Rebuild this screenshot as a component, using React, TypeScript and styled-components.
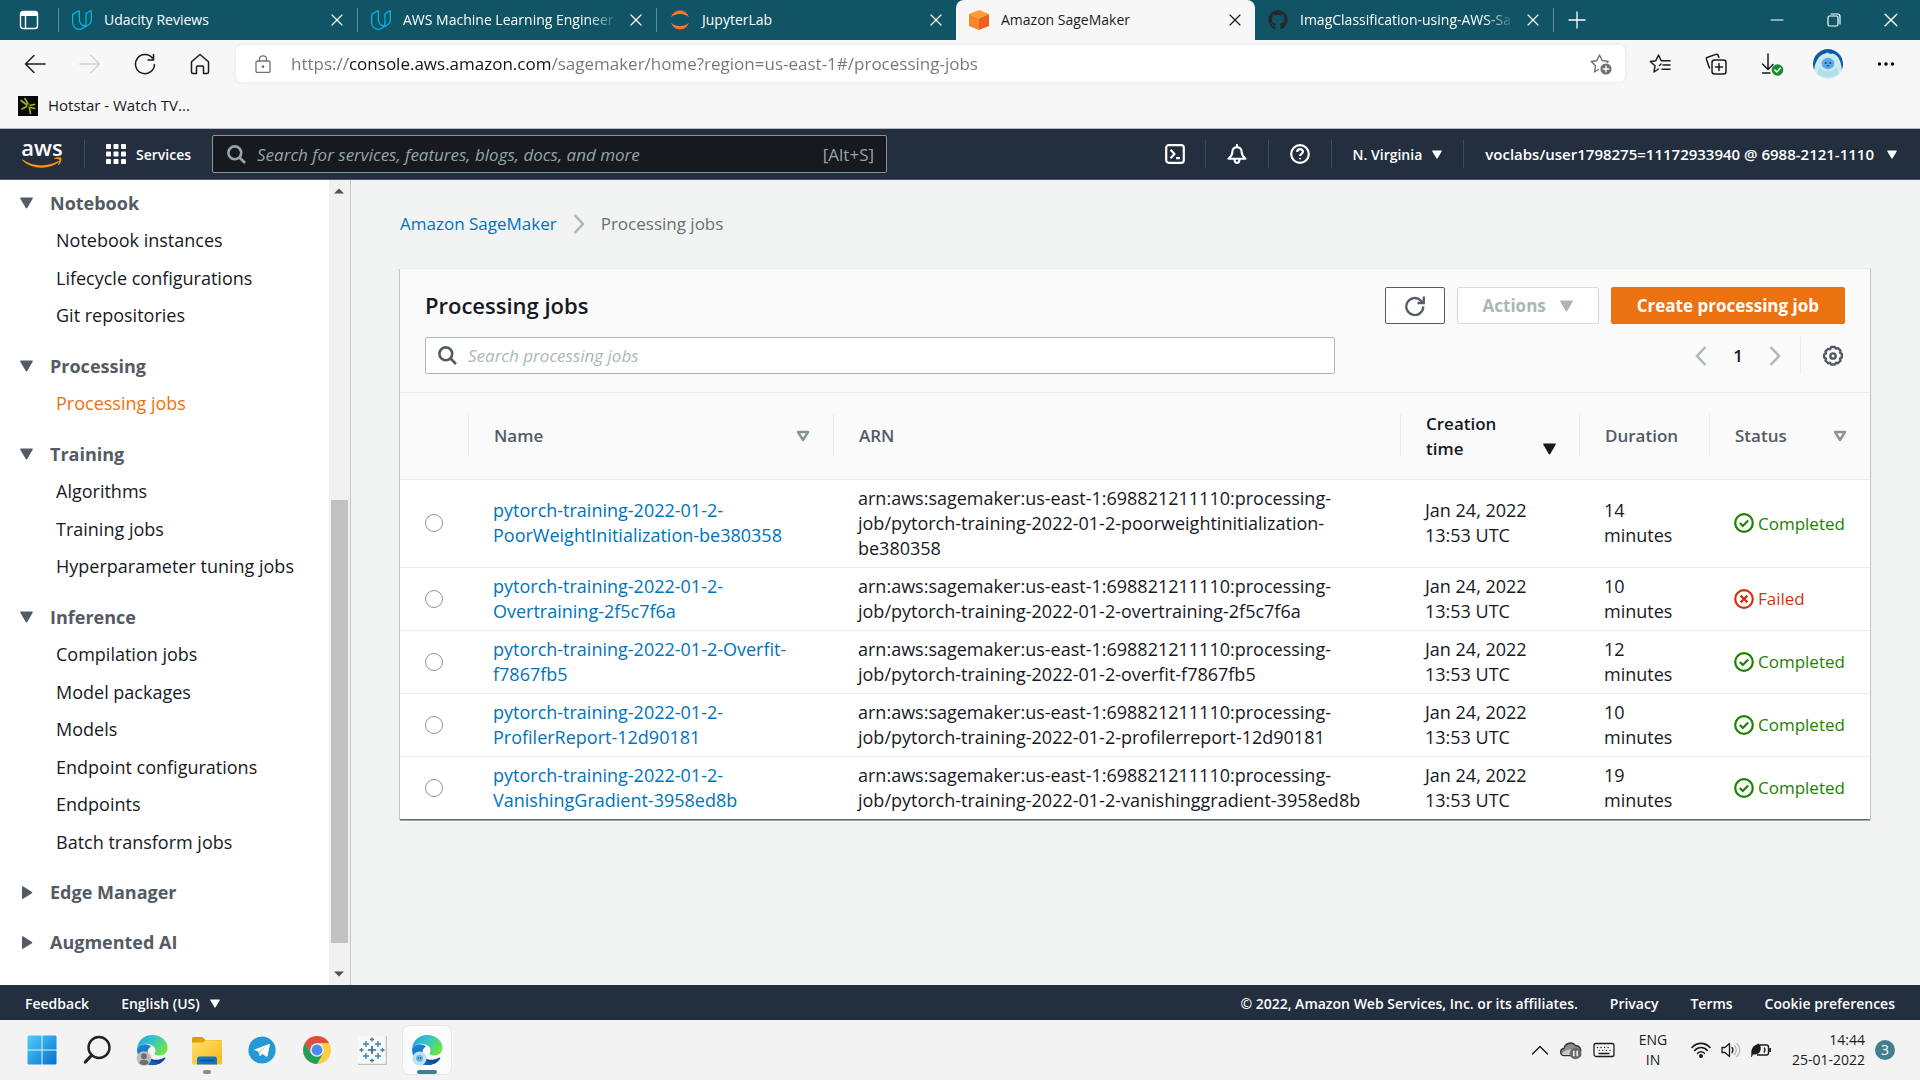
import React from "react";
import styled, { createGlobalStyle, css } from "styled-components";
import { SiUdacity } from "react-icons/si";
import { FaGithub } from "react-icons/fa";

/* ---------- theme ---------- */

const c = {
  teal: "#115465",
  chrome: "#f7f7f7",
  navy: "#232f3e",
  ink: "#16191f",
  slate: "#545b64",
  muted: "#687078",
  mist: "#aab7b8",
  line: "#eaeded",
  link: "#0073bb",
  orange: "#ec7211",
  green: "#1d8102",
  red: "#d13212",
  page: "#f2f3f3",
  taskbar: "#f3f3f3",
};

const GlobalStyle = createGlobalStyle`
  *, *::before, *::after { box-sizing: border-box; }
  body {
    margin: 0;
    font-family: "Open Sans", "Noto Sans", sans-serif;
    font-size: 18px;
    line-height: 25px;
    color: ${c.ink};
  }
  button, input { font: inherit; color: inherit; }
  button { border: 0; padding: 0; background: none; cursor: pointer; }
  a { color: inherit; text-decoration: none; }
  svg { display: block; flex: none; }
`;

const Screen = styled.div`
  display: flex;
  flex-direction: column;
  height: 100vh;
  overflow: hidden;
`;

const IconButton = styled.button<{ $w?: number; $h?: number; $color?: string }>`
  display: flex;
  flex: none;
  align-items: center;
  justify-content: center;
  width: ${(p) => p.$w ?? 20}px;
  height: ${(p) => p.$h ?? 28}px;
  color: ${(p) => p.$color ?? "inherit"};
`;

const Spacer = styled.div`
  flex: 1;
`;

/* ---------- browser tabs ---------- */

const TabStrip = styled.div`
  display: flex;
  flex: none;
  align-items: center;
  height: 40px;
  background: ${c.teal};
  color: #fff;
  font-size: 14px;
`;

const TabMenu = styled.div`
  display: flex;
  align-items: center;
  justify-content: center;
  width: 59px;
  height: 24px;
  border-right: 1px solid #5f8c98;
`;

const Tab = styled.div<{ $active?: boolean; $divider?: boolean }>`
  display: flex;
  align-items: center;
  width: 299px;
  height: 40px;
  padding: 0 14px 0 13px;
  gap: 12px;
  ${(p) =>
    p.$active &&
    css`
      background: ${c.chrome};
      color: #1b1b1b;
      border-radius: 8px 8px 0 0;
    `}
  ${(p) =>
    p.$divider &&
    css`
      height: 24px;
      border-right: 1px solid #5f8c98;
    `}
`;

const TabTitle = styled.button<{ $fade?: boolean }>`
  flex: 1;
  white-space: nowrap;
  text-align: left;
  line-height: 24px;
  ${(p) =>
    p.$fade &&
    css`
      mask-image: linear-gradient(to right, #000 86%, transparent);
    `}
`;

const WindowControls = styled.div`
  display: flex;
  padding-right: 1px;
`;

/* ---------- browser toolbar ---------- */

const Toolbar = styled.div`
  display: flex;
  flex: none;
  align-items: center;
  height: 48px;
  padding: 0 12px 1px 7px;
  background: ${c.chrome};
  color: #1b1b1b;
`;

const AddressBar = styled.label`
  display: flex;
  flex: 1;
  align-items: center;
  height: 37px;
  margin: 0 14px 0 9px;
  padding: 0 13px 0 18px;
  gap: 19px;
  border-radius: 6px;
  background: #fff;
  box-shadow: 0 0 4px rgba(0, 0, 0, 0.08);
  color: #707070;
`;

/* the host name is drawn darker than the rest of the address */
const AddressInput = styled.input`
  flex: 1;
  min-width: 0;
  height: 28px;
  padding: 0;
  border: 0;
  outline: 0;
  font-size: 17px;
  background: linear-gradient(to right, #757575 57px, #111 57px, #111 260px, #757575 260px);
  background-clip: text;
  -webkit-background-clip: text;
  color: transparent;
  caret-color: #111;
`;

const Bookmarks = styled.div`
  display: flex;
  flex: none;
  align-items: center;
  height: 41px;
  padding: 0 18px 5px;
  background: ${c.chrome};
  border-bottom: 1px solid #bcbcbc;
  font-size: 15px;
`;

const Bookmark = styled.a`
  display: flex;
  align-items: center;
  gap: 10px;
`;

/* ---------- console header ---------- */

const ConsoleHeader = styled.header`
  display: flex;
  flex: none;
  align-items: center;
  height: 51px;
  padding-right: 2px;
  background: ${c.navy};
  border-bottom: 1px solid #545b64;
  color: #fff;
  font-weight: 600;
`;

const AwsLogo = styled.a`
  display: flex;
  flex-direction: column;
  align-items: center;
  width: 84px;
  height: 34px;
  font-size: 22px;
  line-height: 20px;
`;

const HeaderCell = styled.div`
  display: flex;
  align-items: center;
  height: 28px;
  padding: 0 21px;
  border-left: 1px solid #414b58;
`;

const HeaderButton = styled.button<{ $large?: boolean }>`
  display: flex;
  align-items: center;
  gap: ${(p) => (p.$large ? 13 : 10)}px;
  font-size: ${(p) => (p.$large ? 15 : 14)}px;
  white-space: nowrap;
`;

const ConsoleSearch = styled.label`
  display: flex;
  flex: none;
  align-items: center;
  width: 675px;
  height: 38px;
  padding: 0 12px 0 14px;
  gap: 11px;
  border: 1px solid #879596;
  border-radius: 2px;
  background: ${c.ink};
  color: #95a5a6;
  font-size: 17px;
  font-weight: 400;
`;

const PlainInput = styled.input<{ $tone: string }>`
  flex: 1;
  min-width: 0;
  height: 28px;
  padding: 0;
  border: 0;
  outline: 0;
  background: none;
  &::placeholder {
    color: ${(p) => p.$tone};
    font-style: italic;
    opacity: 1;
  }
`;

/* ---------- console body ---------- */

const ConsoleBody = styled.div`
  display: flex;
  flex: 1;
  min-height: 0;
  background: ${c.page};
`;

const SideNav = styled.nav`
  width: 329px;
  padding-top: 10px;
  overflow: hidden;
  background: #fff;
`;

const NavGroup = styled.section`
  padding-bottom: 12px;
`;

const NavHeading = styled.button`
  display: flex;
  align-items: center;
  height: 26px;
  padding-left: 20px;
  gap: 17px;
  color: ${c.slate};
  font-weight: 700;
`;

const NavList = styled.ul`
  margin: 0;
  padding: 12px 0 0 56px;
  list-style: none;
`;

const NavItem = styled.li`
  height: 38px;
  &:nth-child(even) {
    height: 37px;
  }
`;

const NavLink = styled.a<{ $current?: boolean }>`
  color: ${(p) => (p.$current ? c.orange : c.ink)};
`;

const Scrollbar = styled.div`
  display: flex;
  flex-direction: column;
  flex: none;
  width: 22px;
  padding-right: 1px;
  border-right: 1px solid #c0c5c7;
  background: #f1f1f1;
  color: #505050;
`;

const ScrollArrow = styled.div`
  display: flex;
  align-items: center;
  justify-content: center;
  height: 22px;
`;

const ScrollTrack = styled.div`
  display: grid;
  flex: 1;
  grid-template-rows: 298fr 443fr 20fr;
`;

const ScrollThumb = styled.div`
  grid-row: 2;
  margin: 0 1px 0 2px;
  background: #c1c1c1;
`;

const Main = styled.main`
  flex: 1;
  min-width: 0;
  padding: 31px 50px 0 49px;
`;

const Breadcrumb = styled.nav`
  display: flex;
  align-items: center;
  gap: 16px;
  margin-bottom: 32px;
  color: ${c.muted};
  font-size: 17px;
`;

const Separator = styled.span`
  color: ${c.mist};
`;

const BlueLink = styled.a`
  color: ${c.link};
`;

const Card = styled.section`
  background: #fff;
  border-top: 1px solid ${c.line};
  box-shadow: 0 1px 1px 0 rgba(0, 28, 36, 0.3), 1px 1px 1px 0 rgba(0, 28, 36, 0.15),
    -1px 1px 1px 0 rgba(0, 28, 36, 0.15), 0 2px 0 0 rgba(0, 28, 36, 0.25);
`;

const CardHead = styled.div`
  display: flex;
  flex-direction: column;
  gap: 13px;
  padding: 18px 25px;
  background: #fafafa;
  border-bottom: 1px solid ${c.line};
`;

const CardRow = styled.div`
  display: flex;
  align-items: center;
  height: 37px;
`;

const CardTitle = styled.h2`
  flex: 1;
  margin: 0;
  font-size: 22px;
  font-weight: 600;
`;

const Actions = styled.div`
  display: flex;
  gap: 12px;
`;

const Button = styled.button<{ $kind: "normal" | "disabled" | "primary" }>`
  display: flex;
  align-items: center;
  justify-content: center;
  gap: 14px;
  height: 37px;
  padding: 0 ${(p) => (p.$kind === "normal" ? 19 : 25)}px;
  border: 1px solid;
  border-radius: 2px;
  font-weight: 700;
  font-size: 17px;
  white-space: nowrap;
  ${(p) =>
    p.$kind === "primary"
      ? css`
          background: ${c.orange};
          border-color: ${c.orange};
          color: #fff;
        `
      : p.$kind === "disabled"
      ? css`
          background: #fff;
          border-color: #d5dbdb;
          color: ${c.mist};
        `
      : css`
          background: #fff;
          border-color: ${c.slate};
          color: ${c.slate};
        `}
`;

const FilterBox = styled.label`
  display: flex;
  flex: 0 1 910px;
  align-items: center;
  height: 37px;
  padding: 0 12px;
  gap: 11px;
  border: 1px solid ${c.mist};
  border-radius: 2px;
  background: #fff;
  color: ${c.slate};
  font-size: 17px;
`;

const Pager = styled.div`
  display: flex;
  align-items: center;
  height: 37px;
  gap: 19px;
  padding-right: 15px;
  border-right: 1px solid ${c.line};
  margin-right: 20px;
  color: ${c.mist};
`;

const PageNumber = styled.button`
  width: 16px;
  color: ${c.ink};
  font-weight: 600;
  font-size: 17px;
`;

/* ---------- table ---------- */

const Table = styled.table`
  width: 100%;
  table-layout: fixed;
  border-collapse: collapse;
`;

const Col = styled.col<{ $w?: number }>`
  width: ${(p) => (p.$w ? `${p.$w}px` : "auto")};
`;

const Th = styled.th`
  height: 86px;
  padding: 0;
  background: #fafafa;
  border-bottom: 1px solid ${c.line};
  text-align: left;
`;

const ThInner = styled.div<{ $sorted?: boolean; $last?: boolean }>`
  display: flex;
  align-items: center;
  justify-content: space-between;
  height: 43px;
  padding: 0 23px 0 25px;
  border-right: ${(p) => (p.$last ? 0 : 1)}px solid ${c.line};
  color: ${(p) => (p.$sorted ? c.ink : c.slate)};
  font-size: 17px;
  font-weight: 600;
`;

const SortButton = styled.button<{ $sorted?: boolean }>`
  align-self: ${(p) => (p.$sorted ? "flex-end" : "center")};
  padding: 2px 0;
  color: ${(p) => (p.$sorted ? c.ink : "#879596")};
`;

const Td = styled.td`
  padding: 6px 0 6px 24px;
  border-bottom: 1px solid ${c.line};
  white-space: pre-line;
  tr:last-child > & {
    border-bottom: 0;
  }
`;

const Radio = styled.input`
  display: block;
  appearance: none;
  width: 18px;
  height: 18px;
  margin: 0 0 0 1px;
  border: 1px solid #879596;
  border-radius: 50%;
  background: #fff;
`;

const Status = styled.span<{ $ok: boolean }>`
  display: flex;
  align-items: center;
  gap: 4px;
  color: ${(p) => (p.$ok ? c.green : c.red)};
  font-size: 17px;
`;

/* ---------- footer ---------- */

const Footer = styled.footer`
  display: flex;
  flex: none;
  align-items: center;
  height: 35px;
  padding: 1px 25px 0;
  gap: 32px;
  background: ${c.navy};
  color: #fff;
  font-size: 14px;
  font-weight: 600;
  white-space: nowrap;
`;

/* ---------- taskbar ---------- */

const Taskbar = styled.div`
  display: flex;
  flex: none;
  align-items: center;
  height: 60px;
  padding: 0 25px 0 18px;
  background: ${c.taskbar};
  color: #1b1b1b;
`;

const Apps = styled.div`
  display: flex;
  flex: 1;
  gap: 7px;
`;

const AppButton = styled.button<{ $active?: boolean; $running?: boolean }>`
  display: grid;
  grid-template-rows: 36px 4px;
  row-gap: 2px;
  justify-items: center;
  align-items: center;
  width: 48px;
  height: 48px;
  padding-top: 6px;
  border-radius: 6px;
  ${(p) =>
    p.$active &&
    css`
      background: #fbfbfb;
      box-shadow: 0 0 0 1px #e8e8e8;
    `}
  &::after {
    content: "";
    width: ${(p) => (p.$active ? 20 : p.$running ? 8 : 0)}px;
    height: 4px;
    border-radius: 2px;
    background: ${(p) => (p.$active ? "#417f8e" : "#8a8a8a")};
  }
`;

const Tray = styled.div`
  display: flex;
  align-items: center;
  gap: 10px;
  font-size: 14px;
  line-height: 20px;
`;

const Stack = styled.div<{ $align: "center" | "right"; $w: number }>`
  width: ${(p) => p.$w}px;
  text-align: ${(p) => p.$align};
  white-space: pre-line;
`;

const Badge = styled.span`
  display: flex;
  align-items: center;
  justify-content: center;
  width: 20px;
  height: 20px;
  border-radius: 50%;
  background: #417f8e;
  color: #fff;
  font-size: 14px;
`;

/* ---------- icons ---------- */

type IconProps = { size?: number };

const Line: React.FC<{ size?: number; box?: number; w?: number; children: React.ReactNode }> = ({
  size = 20,
  box = 20,
  w = 1.3,
  children,
}) => (
  <svg
    width={size}
    height={size}
    viewBox={`0 0 ${box} ${box}`}
    fill="none"
    stroke="currentColor"
    strokeWidth={w}
    strokeLinecap="round"
    strokeLinejoin="round"
    aria-hidden
  >
    {children}
  </svg>
);

const Close = ({ size = 12 }: IconProps) => (
  <Line size={size} box={12} w={1.2}>
    <path d="M1 1l10 10M11 1L1 11" />
  </Line>
);

const Caret = ({ w = 10 }: { w?: number }) => (
  <svg width={w} height={w - 1} viewBox="0 0 12 11" fill="currentColor" aria-hidden>
    <path d="M.8.5h10.4c.6 0 .9.5.6.9L6.7 10.1c-.3.6-1.1.6-1.4 0L.2 1.4C-.1 1 .2.5.8.5z" />
  </svg>
);

const CaretRight = () => (
  <svg width={13} height={13} viewBox="0 0 13 13" fill="currentColor" aria-hidden>
    <path d="M2 .8v11.4c0 .6.6.9 1 .6l9-5.600c.5-.3.5-1 0-1.300L3 .2C2.600 0 2 .2 2 .8z" />
  </svg>
);

const SmallArrow = ({ up = false }: { up?: boolean }) => (
  <svg width={10} height={6} viewBox="0 0 10 6" fill="currentColor" aria-hidden>
    <path d={up ? "M0 5.5L5 .5l5 5z" : "M0 .5l5 5 5-5z"} />
  </svg>
);

const SortOutline = () => (
  <svg width={14} height={12} viewBox="0 0 14 12" fill="none" stroke="currentColor" strokeWidth={2.4} strokeLinejoin="round" aria-hidden>
    <path d="M2 2h10l-5 8z" />
  </svg>
);

const Magnifier = ({ size = 19 }: IconProps) => (
  <svg width={size} height={size} viewBox="0 0 19 19" fill="none" stroke="currentColor" strokeWidth={2.6} aria-hidden>
    <circle cx="7.8" cy="7.8" r="6.4" />
    <path d="M12.500 12.500l5.500 5.500" />
  </svg>
);

const Chevron = ({ left = false }: { left?: boolean }) => (
  <svg width={12} height={20} viewBox="0 0 12 20" fill="none" stroke="currentColor" strokeWidth={2.4} aria-hidden>
    <path d={left ? "M10.5 1L2 10l8.5 9" : "M1.5 1L10 10l-8.5 9"} />
  </svg>
);

const Refresh = () => (
  <svg width={20} height={20} viewBox="0 0 20 20" fill="none" stroke="currentColor" strokeWidth={2.3} aria-hidden>
    <path d="M18.300 10.500A8.500 8.500 0 1 1 15.800 4.500L18.200 6.600" />
    <path d="M18.800.5v6.500h-6.300" />
  </svg>
);

const Gear = () => (
  <svg width={22} height={22} viewBox="0.900 0.600 18.200 18.200" fill="none" stroke="currentColor" strokeWidth={2} strokeLinejoin="round" aria-hidden>
    <path d="M8.500 2.200h3l.9 1.400 1.700-.4 2.100 2.100-.4 1.700 1.500.9v3.100l-1.500.9.400 1.700-2.100 2.100-1.700-.4-.9 1.500h-3l-.9-1.500-1.700.4-2.100-2.100.4-1.700-1.500-.9V8.500l1.500-.9-.4-1.700 2.100-2.100 1.700.4z" />
    <circle cx="10" cy="9.700" r="2.200" />
  </svg>
);

const StatusIcon = ({ ok }: { ok: boolean }) => (
  <svg width={20} height={20} viewBox="0 0 20 20" fill="none" stroke="currentColor" strokeWidth={2.2} aria-hidden>
    <circle cx="10" cy="10" r="8.800" />
    <path d={ok ? "M5.8 10l3 3 5.4-5.6" : "M6.6 6.6l6.8 6.8M13.4 6.6l-6.8 6.8"} />
  </svg>
);

const AppGrid = () => (
  <svg width={20} height={20} viewBox="0 0 20 20" fill="currentColor" aria-hidden>
    {[0, 7.5, 15].map((y) => [0, 7.5, 15].map((x) => <rect key={`${x}-${y}`} x={x} y={y} width={5} height={5} rx={0.8} />))}
  </svg>
);

const Swoosh = () => (
  <svg width={40} height={12} viewBox="0 0 40 12" aria-hidden>
    <path d="M.6 2.500C10 9.500 25 10.500 36 4.300c.8-.4 1.400.4.700 1C27 13 9 12.500.3 3.300c-.5-.5-.1-1.100.3-.8z" fill="#ff9900" />
    <path d="M32 1.400c2-1.300 6.300-1.500 7.200-.5.800 1.100-.3 5.300-2.500 7.200-.4.300-.8.100-.6-.3.900-2.100 1.500-4.500 1.100-5.100-.500-.6-3-.7-4.900-.6-.5 0-.6-.4-.3-.7z" fill="#ff9900" />
  </svg>
);

const Shell = () => (
  <Line w={2.2}>
    <rect x="1.200" y="1.200" width="17.600" height="17.600" rx="2.500" />
    <path d="M5.500 5.800l4 4.200-4 4.200M11 14.200h4" strokeLinecap="butt" />
  </Line>
);

const Bell = () => (
  <Line w={2.1}>
    <path d="M10 1v2M10 3.200c-3 0-4.600 2-4.600 4.600 0 3.200-1.200 4.700-3.900 6.900h17c-2.700-2.200-3.900-3.700-3.900-6.900C14.600 5.200 13 3.200 10 3.200zM7.500 15c0 5.300 5 5.300 5 0" />
  </Line>
);

const Help = () => (
  <Line w={2.2}>
    <circle cx="10" cy="10" r="8.800" />
    <path d="M7.200 8c0-3.900 5.800-3.700 5.700-.2 0 2-2.800 2-2.800 4.200M10 14v1.300" strokeLinecap="butt" />
  </Line>
);

const JupyterIcon = () => (
  <svg width={20} height={20} viewBox="0 0 20 20" fill="#f37726" aria-hidden>
    <path d="M1 7.300C2.500 3 6 .6 10 .6S17.500 3 19 7.300C17 5.300 13.800 4 10 4S3 5.300 1 7.300z" />
    <path d="M1 12.700C2.500 17 6 19.400 10 19.400s7.500-2.400 9-6.700c-2 2-5.200 3.300-9 3.300s-7-1.300-9-3.300z" />
  </svg>
);

const CubeIcon = () => (
  <svg width={20} height={20} viewBox="0 0 20 20" aria-hidden>
    <path d="M10 0l10 4-10 4.500L0 4z" fill="#ff9d2e" />
    <path d="M0 4l10 4.500V20L0 16z" fill="#f8852a" />
    <path d="M20 4L10 8.500V20l10-4z" fill="#ec5f20" />
  </svg>
);

const HotstarIcon = () => (
  <svg width={20} height={20} viewBox="0 0 20 20" aria-hidden>
    <rect width="20" height="20" fill="#050a08" />
    <path
      d="M3 4.500l6 4.500M7 2.500l3 5.500M16.500 8.500l-5.500 1M16.500 12.500l-5.500-1.500M12.500 17.500l-1-5.500M4 13l5.500-3"
      stroke="#a3ae1a"
      strokeWidth="1.600"
      strokeLinecap="round"
    />
    <circle cx="10.500" cy="10" r="1.400" fill="#16351a" />
  </svg>
);

const Avatar = ({ size = 30 }: IconProps) => (
  <svg width={size} height={size} viewBox="0 0 30 30" aria-hidden>
    <circle cx="15" cy="15" r="15" fill="#cdeaf0" />
    <path d="M1.200 21A15 15 0 1 1 28.800 21C28.500 14 26 6 19.500 4.500L17 5.500 15 3.500 13 4.500C6 5 2 13 1.200 21z" fill="#0a5ca8" />
    <path d="M3.500 24C2.500 14 6.500 5.500 12 5l2-1.500L15.500 5 17 4.500c6 1.500 10 9.500 9.500 19.500-6 7-17 7-23 0z" fill="#cbeaf0" />
    <path d="M6 17c2 7 16 7 18 0l1.500 7.500c-5 5-16 5-21 0z" fill="#b2dfe6" />
    <ellipse cx="15" cy="14.500" rx="6.300" ry="5.800" fill="#5ba9e8" />
    <circle cx="12.800" cy="14" r="1" fill="#16406e" />
    <circle cx="17.200" cy="14" r="1" fill="#16406e" />
    <path d="M13.500 17q1.500-1 3 0" stroke="#16406e" fill="none" />
  </svg>
);

const EdgeIcon = ({ user = false }: { user?: boolean }) => (
  <svg width={32} height={32} viewBox="0 0 32 32" aria-hidden>
    <defs>
      <linearGradient id="edgeTop" x1="0" y1="0" x2="1" y2="0.500">
        <stop offset="0" stopColor="#1fa4e4" />
        <stop offset=".5" stopColor="#33c5c8" />
        <stop offset="1" stopColor="#6be34a" />
      </linearGradient>
      <linearGradient id="edgeSide" x1="0" y1="0" x2="0.400" y2="1">
        <stop offset="0" stopColor="#1a8ad8" />
        <stop offset="1" stopColor="#0f5fb4" />
      </linearGradient>
    </defs>
    <path d="M11.500 17C11 25 19 28.500 28.500 23.500c.8-.3 1.200.3.700 1C25.500 31 17 32.500 11 29.500z" fill="#0c4a93" />
    <path d="M1 15C1 24 7 31 16 31c3 0 6-1 8-2-7 .5-13-5-12.500-11 .2-2.500 1.500-4.200 3.500-5.500C10 8.500 3 10 1 15z" fill="url(#edgeSide)" />
    <path d="M1 14.500C2 6.500 8 1 16 1c9 0 15.500 6 15.500 12.500 0 5-3.500 8-8 8-4 0-5.500-1.300-4.700-2.700 1.200-1.800 1-4.300-.8-6C13.500 8.500 4.500 8.500 1 14.500z" fill="url(#edgeTop)" />
    {user ? (
      <>
        <circle cx="8" cy="24.500" r="7.300" fill="#bdbdbd" />
        <circle cx="8" cy="22.200" r="2.900" fill="#6e6e6e" />
        <path d="M3.300 29c.3-4.500 9.100-4.500 9.400 0-2.500 2.800-6.900 2.800-9.400 0z" fill="#6e6e6e" />
      </>
    ) : (
      <>
        <circle cx="8.500" cy="24.500" r="7" fill="#bfe3ee" />
        <circle cx="8.500" cy="24.300" r="3.400" fill="#6bb2e6" />
        <circle cx="7.300" cy="24" r=".8" fill="#1d5d96" />
        <circle cx="9.700" cy="24" r=".8" fill="#1d5d96" />
      </>
    )}
  </svg>
);

const WindowsIcon = () => (
  <svg width={30} height={30} viewBox="0 0 30 30" aria-hidden>
    <defs>
      <linearGradient id="win" x1="0" y1="0" x2="1" y2="1">
        <stop offset="0" stopColor="#50d0fb" />
        <stop offset="1" stopColor="#0270d0" />
      </linearGradient>
    </defs>
    <path d="M1.500.5h13v14h-14v-13zM15.500.5h13l1 1v13h-14zM.5 15.500h14v14h-13l-1-1zM15.500 15.500h14v13l-1 1h-13z" fill="url(#win)" />
  </svg>
);

const TaskSearchIcon = () => (
  <svg width={30} height={30} viewBox="0 0 30 30" fill="none" stroke="#222" strokeLinecap="round" aria-hidden>
    <circle cx="17" cy="12.500" r="10.500" strokeWidth="2.400" />
    <path d="M9.500 20.500L3.300 27" strokeWidth="3.200" />
  </svg>
);

const FolderIcon = () => (
  <svg width={32} height={32} viewBox="0 0 32 32" aria-hidden>
    <defs>
      <linearGradient id="fold" x1="0" y1="0" x2="1" y2="1">
        <stop offset="0" stopColor="#ffdf70" />
        <stop offset="1" stopColor="#fbb915" />
      </linearGradient>
    </defs>
    <path d="M1 4.500C1 3.600 1.600 3 2.500 3h9l3 3H29.500c.8 0 1.500.7 1.500 1.500V12H1z" fill="#e0a100" />
    <path d="M1 8.500h11l2.500-2.300H31V29c0 .8-.6 1.500-1.500 1.500h-27C1.600 30.500 1 29.800 1 29z" fill="url(#fold)" />
    <path d="M6 30.500V25C6 23.600 6.900 22.500 8.500 22.500h15c1.600 0 2.500 1.100 2.500 2.500v5.500z" fill="#1574c4" />
    <path d="M10 26.500h12" stroke="#0a4d92" strokeWidth="1.500" strokeLinecap="round" />
  </svg>
);

const TelegramIcon = () => (
  <svg width={28} height={28} viewBox="0 0 28 28" aria-hidden>
    <circle cx="14" cy="14" r="13.600" fill="#2399d6" />
    <path d="M6 13.700l14.800-5.800c.8-.3 1.300.2 1.100 1.100L19.500 20c-.2.8-.7 1-1.400.6l-3.700-2.700-1.900 1.800c-.4.400-.9.300-1-.3l-1.200-4-4.200-1.300c-.7-.2-.7-.1-.1-.4z" fill="#fff" />
    <path d="M10.600 15.300l7.900-5-6.300 6-.6 3.300z" fill="#b9dcef" />
  </svg>
);

const ChromeIcon = () => (
  <svg width={32} height={32} viewBox="0 0 32 32" aria-hidden>
    <circle cx="16" cy="16" r="14" fill="#fbcf45" />
    <path d="M3.900 9A14 14 0 0 0 16 30L22.100 19.500H9.900z" fill="#1fa15d" />
    <path d="M16 2A14 14 0 0 1 28.100 9H16L9.900 19.500 3.900 9A14 14 0 0 1 16 2z" fill="#dd4f43" />
    <circle cx="16" cy="16" r="6.800" fill="#f3f3f3" />
    <circle cx="16" cy="16" r="5.400" fill="#4a8af4" />
  </svg>
);

const TableauIcon = () => {
  const plus = (x: number, y: number, r: number) => `M${x - r} ${y}h${2 * r}M${x} ${y - r}v${2 * r}`;
  return (
    <svg width={30} height={30} viewBox="0 0 30 30" fill="none" aria-hidden>
      <rect x="1" y="1" width="28" height="28" fill="#f8f8f8" />
      <path d="M1 29.300h28.300V1" stroke="#bdbdbd" strokeWidth="1.200" />
      <path d={plus(15, 15, 4)} stroke="#2f6f9b" strokeWidth="1.700" />
      <path d={[plus(9, 9, 3), plus(21, 9, 3), plus(9, 21, 3), plus(21, 21, 3)].join("")} stroke="#3f7fa8" strokeWidth="1.400" />
      <path d={[plus(15, 4.5, 2), plus(15, 25.5, 2), plus(4.5, 15, 2), plus(25.5, 15, 2)].join("")} stroke="#3f7fa8" strokeWidth="1.300" />
    </svg>
  );
};

/* ---------- data ---------- */

const tabs = [
  { title: "Udacity Reviews", icon: <SiUdacity size={20} color="#02b3e4" />, divider: true },
  { title: "AWS Machine Learning Engineer", icon: <SiUdacity size={20} color="#02b3e4" />, divider: true, fade: true },
  { title: "JupyterLab", icon: <JupyterIcon /> },
  { title: "Amazon SageMaker", icon: <CubeIcon />, active: true },
  { title: "ImagClassification-using-AWS-Sa", icon: <FaGithub size={20} color="#24292e" />, divider: true, fade: true },
];

const nav = [
  { title: "Notebook", items: ["Notebook instances", "Lifecycle configurations", "Git repositories"] },
  { title: "Processing", items: ["Processing jobs"] },
  { title: "Training", items: ["Algorithms", "Training jobs", "Hyperparameter tuning jobs"] },
  {
    title: "Inference",
    items: ["Compilation jobs", "Model packages", "Models", "Endpoint configurations", "Endpoints", "Batch transform jobs"],
  },
  { title: "Edge Manager", items: [] },
  { title: "Augmented AI", items: [] },
  { title: "AWS Marketplace", items: [] },
];

const arn = "arn:aws:sagemaker:us-east-1:698821211110:processing-\njob/pytorch-training-2022-01-2-";

const jobs = [
  { name: "\nPoorWeightInitialization-be380358", arn: "poorweightinitialization-\nbe380358", mins: 14, ok: true },
  { name: "\nOvertraining-2f5c7f6a", arn: "overtraining-2f5c7f6a", mins: 10, ok: false },
  { name: "Overfit-\nf7867fb5", arn: "overfit-f7867fb5", mins: 12, ok: true },
  { name: "\nProfilerReport-12d90181", arn: "profilerreport-12d90181", mins: 10, ok: true },
  { name: "\nVanishingGradient-3958ed8b", arn: "vanishinggradient-3958ed8b", mins: 19, ok: true },
];

/* ---------- sections ---------- */

const BrowserChrome = () => (
  <>
    <TabStrip>
      <TabMenu>
        <IconButton aria-label="Tab actions">
          <svg width={20} height={20} viewBox="0 0 20 20" fill="none" stroke="#fff" strokeWidth={1.4} aria-hidden>
            <rect x="1.500" y="1.500" width="17" height="17" rx="2.500" />
            <path d="M2 4h16" strokeWidth="4" />
            <path d="M6.500 5v13" />
          </svg>
        </IconButton>
      </TabMenu>
      {tabs.map((t) => (
        <Tab key={t.title} $active={t.active} $divider={t.divider}>
          {t.icon}
          <TabTitle $fade={t.fade}>{t.title}</TabTitle>
          <IconButton $w={12} aria-label={`Close ${t.title}`}>
            <Close />
          </IconButton>
        </Tab>
      ))}
      <IconButton $w={45} aria-label="New tab">
        <Line size={18} box={18}>
          <path d="M9 1v16M1 9h16" />
        </Line>
      </IconButton>
      <Spacer />
      <WindowControls>
        <IconButton $w={57} aria-label="Minimize">
          <Line size={14} box={14} w={1.2}>
            <path d="M1 7h12" />
          </Line>
        </IconButton>
        <IconButton $w={57} aria-label="Restore">
          <Line size={14} box={14} w={1.2}>
            <rect x="1" y="3" width="10" height="10" rx="1.500" />
            <path d="M4 1h6.500Q13 1 13 3.500V11" />
          </Line>
        </IconButton>
        <IconButton $w={57} aria-label="Close window">
          <Close size={14} />
        </IconButton>
      </WindowControls>
    </TabStrip>
    <Toolbar>
      <IconButton $w={55} aria-label="Back">
        <Line size={22} box={22} w={1.5}>
          <path d="M21 11H1.500M10 2.500L1.500 11l8.500 8.500" />
        </Line>
      </IconButton>
      <IconButton $w={55} $color="#d0d0d0" aria-label="Forward">
        <Line size={22} box={22} w={1.5}>
          <path d="M1 11h19.500M12 2.500l8.500 8.500-8.500 8.500" />
        </Line>
      </IconButton>
      <IconButton $w={55} aria-label="Refresh page">
        <Line size={22} box={22} w={1.5}>
          <path d="M20.500 11.500A9.500 9.500 0 1 1 18.300 5M19.500 1.500V7H14" />
        </Line>
      </IconButton>
      <IconButton $w={55} aria-label="Home">
        <Line size={22} box={22} w={1.5}>
          <path d="M2.500 8.700L11 1.500l8.500 7.200V19q0 1.500-1.500 1.500h-3.500V14q0-1-1-1h-5q-1 0-1 1v6.500H4Q2.500 20.500 2.500 19z" />
        </Line>
      </IconButton>
      <AddressBar>
        <Line size={18} box={18} w={1.3}>
          <rect x="2" y="6" width="14" height="11.500" rx="1.500" />
          <path d="M5.500 6V4C5.500-.3 12.500-.3 12.500 4v2" />
          <circle cx="9" cy="11.700" r=".7" fill="currentColor" />
        </Line>
        <AddressInput
          aria-label="Address"
          defaultValue="https://console.aws.amazon.com/sagemaker/home?region=us-east-1#/processing-jobs"
        />
        <IconButton $w={22} aria-label="Add to favorites">
          <Line size={22} box={22} w={1.4}>
            <path d="M8.500 16.500L4.500 19l1-6.200-4.300-4.300 5.600-.8L9.500 2l2.700 5.500 6 1-1 1" />
            <circle cx="16" cy="16" r="5.600" fill="currentColor" stroke="none" />
            <path d="M16 13.200v5.600M13.200 16h5.600" stroke="#fff" />
          </Line>
        </IconButton>
      </AddressBar>
      <IconButton $w={42} aria-label="Favorites">
        <Line size={22} box={22} w={1.5}>
          <path d="M9.500 16L5 19l1-6.200L1.300 8.500l5.500-.8L9.500 2l2.700 5.700M14 7.700h7M14 12h7M13 16.300h8M12.200 7.700l1.800 0M12 11l-1.500 1.500" />
        </Line>
      </IconButton>
      <IconButton $w={70} aria-label="Collections">
        <Line size={22} box={22} w={1.5}>
          <rect x="7" y="7" width="14" height="14" rx="2.500" />
          <path d="M14 10.500v7M10.500 14h7M4.500 15L1.500 6.500Q1 4.800 2.600 4.200L11 1.400q1.600-.5 2.200 1l.6 1.800" />
        </Line>
      </IconButton>
      <IconButton $w={42} aria-label="Downloads">
        <Line size={24} box={24} w={1.5}>
          <path d="M8 2v15M2.500 12L8 17.500 13 12.500M2.500 21H10" />
          <circle cx="17.500" cy="18" r="5.800" fill="#1a8a36" stroke="none" />
          <path d="M14.800 18l2 2 3.500-3.700" stroke="#fff" />
        </Line>
      </IconButton>
      <IconButton $w={70} $h={32} aria-label="Profile">
        <Avatar />
      </IconButton>
      <IconButton $w={45} aria-label="Settings and more">
        <svg width={18} height={4} viewBox="0 0 18 4" aria-hidden>
          <circle cx="2.500" cy="2" r="1.700" />
          <circle cx="9" cy="2" r="1.700" />
          <circle cx="15.500" cy="2" r="1.700" />
        </svg>
      </IconButton>
    </Toolbar>
    <Bookmarks>
      <Bookmark href="#hotstar">
        <HotstarIcon />
        Hotstar - Watch TV...
      </Bookmark>
    </Bookmarks>
  </>
);

const AwsHeader = () => (
  <ConsoleHeader>
    <AwsLogo href="#aws">
      aws
      <Swoosh />
    </AwsLogo>
    <HeaderCell>
      <HeaderButton>
        <AppGrid />
        Services
      </HeaderButton>
    </HeaderCell>
    <ConsoleSearch>
      <Magnifier />
      <PlainInput $tone="#95a5a6" aria-label="Search the console" placeholder="Search for services, features, blogs, docs, and more" />
      [Alt+S]
    </ConsoleSearch>
    <Spacer />
    <IconButton $w={60} aria-label="CloudShell">
      <Shell />
    </IconButton>
    <HeaderCell>
      <IconButton aria-label="Notifications">
        <Bell />
      </IconButton>
    </HeaderCell>
    <HeaderCell>
      <IconButton aria-label="Support">
        <Help />
      </IconButton>
    </HeaderCell>
    <HeaderCell>
      <HeaderButton>
        N. Virginia
        <Caret />
      </HeaderButton>
    </HeaderCell>
    <HeaderCell>
      <HeaderButton $large>
        voclabs/user1798275=11172933940 @ 6988-2121-1110
        <Caret />
      </HeaderButton>
    </HeaderCell>
  </ConsoleHeader>
);

const Sidebar = () => (
  <>
    <SideNav>
      {nav.map((g) => (
        <NavGroup key={g.title}>
          <NavHeading>
            {g.items.length ? <Caret w={13} /> : <CaretRight />}
            {g.title}
          </NavHeading>
          <NavList>
            {g.items.map((item) => (
              <NavItem key={item}>
                <NavLink href="#nav" $current={item === "Processing jobs"}>
                  {item}
                </NavLink>
              </NavItem>
            ))}
          </NavList>
        </NavGroup>
      ))}
    </SideNav>
    <Scrollbar aria-hidden>
      <ScrollArrow>
        <SmallArrow up />
      </ScrollArrow>
      <ScrollTrack>
        <ScrollThumb />
      </ScrollTrack>
      <ScrollArrow>
        <SmallArrow />
      </ScrollArrow>
    </Scrollbar>
  </>
);

const JobsTable = () => (
  <Table>
    <colgroup>
      <Col $w={69} />
      <Col $w={365} />
      <Col />
      <Col $w={179} />
      <Col $w={130} />
      <Col $w={160} />
    </colgroup>
    <thead>
      <tr>
        <Th aria-label="Selection">
          <ThInner />
        </Th>
        <Th>
          <ThInner>
            Name
            <SortButton aria-label="Sort by name">
              <SortOutline />
            </SortButton>
          </ThInner>
        </Th>
        <Th>
          <ThInner>ARN</ThInner>
        </Th>
        <Th aria-sort="descending">
          <ThInner $sorted>
            Creation
            <br />
            time
            <SortButton $sorted aria-label="Sort by creation time">
              <Caret w={13} />
            </SortButton>
          </ThInner>
        </Th>
        <Th>
          <ThInner>Duration</ThInner>
        </Th>
        <Th>
          <ThInner $last>
            Status
            <SortButton aria-label="Sort by status">
              <SortOutline />
            </SortButton>
          </ThInner>
        </Th>
      </tr>
    </thead>
    <tbody>
      {jobs.map((j) => (
        <tr key={j.arn}>
          <Td>
            <Radio type="radio" name="job" aria-label={j.arn} />
          </Td>
          <Td>
            <BlueLink href="#job">{`pytorch-training-2022-01-2-${j.name}`}</BlueLink>
          </Td>
          <Td>{arn + j.arn}</Td>
          <Td>{"Jan 24, 2022\n13:53 UTC"}</Td>
          <Td>{`${j.mins}\nminutes`}</Td>
          <Td>
            <Status $ok={j.ok}>
              <StatusIcon ok={j.ok} />
              {j.ok ? "Completed" : "Failed"}
            </Status>
          </Td>
        </tr>
      ))}
    </tbody>
  </Table>
);

const JobsPage = () => (
  <Main>
    <Breadcrumb aria-label="Breadcrumb">
      <BlueLink href="#sagemaker">Amazon SageMaker</BlueLink>
      <Separator>
        <Chevron />
      </Separator>
      <span>Processing jobs</span>
    </Breadcrumb>
    <Card>
      <CardHead>
        <CardRow>
          <CardTitle>Processing jobs</CardTitle>
          <Actions>
            <Button $kind="normal" aria-label="Refresh">
              <Refresh />
            </Button>
            <Button $kind="disabled" disabled>
              Actions
              <Caret w={13} />
            </Button>
            <Button $kind="primary">Create processing job</Button>
          </Actions>
        </CardRow>
        <CardRow>
          <FilterBox>
            <Magnifier />
            <PlainInput $tone={c.mist} aria-label="Search processing jobs" placeholder="Search processing jobs" />
          </FilterBox>
          <Spacer />
          <Pager>
            <IconButton aria-label="Previous page">
              <Chevron left />
            </IconButton>
            <PageNumber>1</PageNumber>
            <IconButton aria-label="Next page">
              <Chevron />
            </IconButton>
          </Pager>
          <IconButton $w={24} aria-label="Preferences" $color={c.slate}>
            <Gear />
          </IconButton>
        </CardRow>
      </CardHead>
      <JobsTable />
    </Card>
  </Main>
);

const ConsoleFooter = () => (
  <Footer>
    <a href="#feedback">Feedback</a>
    <HeaderButton>
      English (US)
      <Caret />
    </HeaderButton>
    <Spacer />
    <span>© 2022, Amazon Web Services, Inc. or its affiliates.</span>
    <a href="#privacy">Privacy</a>
    <a href="#terms">Terms</a>
    <a href="#cookies">Cookie preferences</a>
  </Footer>
);

const WindowsTaskbar = () => (
  <Taskbar>
    <Apps>
      <AppButton aria-label="Start">
        <WindowsIcon />
      </AppButton>
      <AppButton aria-label="Search">
        <TaskSearchIcon />
      </AppButton>
      <AppButton aria-label="Edge">
        <EdgeIcon user />
      </AppButton>
      <AppButton aria-label="File Explorer" $running>
        <FolderIcon />
      </AppButton>
      <AppButton aria-label="Telegram">
        <TelegramIcon />
      </AppButton>
      <AppButton aria-label="Chrome">
        <ChromeIcon />
      </AppButton>
      <AppButton aria-label="Tableau">
        <TableauIcon />
      </AppButton>
      <AppButton aria-label="Edge, current window" $active>
        <EdgeIcon />
      </AppButton>
    </Apps>
    <Tray>
      <Line size={18} box={18} w={1.4}>
        <path d="M1.500 13L9 5.500l7.500 7.500" />
      </Line>
      <svg width={24} height={20} viewBox="0 0 24 20" aria-hidden>
        <path d="M5.500 15.500C.5 15.500.5 9 5 8.500 6 3 13.500 1 16.500 5.500 21 6 22.500 9 21.500 12v3.500z" fill="#8d8d8d" stroke="#333" strokeWidth="1.300" />
        <path d="M3 13.500C7 8.500 13 8.500 19 12l-3 3H5.500C4 15 3 14.500 3 13.500z" fill="#c9c9c9" />
        <circle cx="16.500" cy="13.500" r="5.800" fill="#6b6b6b" />
        <path d="M14.800 10.800v5.400M18.200 10.800v5.400" stroke="#fff" strokeWidth="1.400" />
      </svg>
      <Line size={22} box={22} w={1.3}>
        <rect x="1" y="4.500" width="20" height="13" rx="2" />
        <path d="M4.500 8.500h.1M8 8.500h.1M11.500 8.500h.1M15 8.500h.1M6.200 11.300h.1M9.700 11.300h.1M13.200 11.300h.1M17 11.300h.1M6 14.500h10" />
      </Line>
      <Stack $align="center" $w={56}>{"ENG\nIN"}</Stack>
      <Line size={20} w={1.6}>
        <path d="M1 7.500C6 2 14 2 19 7.500M3.700 10.500c3.500-4 9.100-4 12.600 0M6.600 13.300c2-2.100 4.800-2.100 6.800 0" />
        <circle cx="10" cy="16" r="1.200" fill="currentColor" />
      </Line>
      <Line size={20} w={1.3}>
        <path d="M1 7.500h3L8.500 3.500v13L4 12.500H1zM11 7.500c1.200 1.500 1.200 3.500 0 5" />
        <path d="M13.500 5.500c2.300 2.800 2.300 6.200 0 9M16 3.500c3.500 4 3.500 9 0 13" stroke="#b5b5b5" />
      </Line>
      <svg width={20} height={20} viewBox="0 0 20 20" aria-hidden>
        <path d="M9 5h6.500q2 0 2 2v6q0 2-2 2H6" fill="none" stroke="#1b1b1b" strokeWidth="1.400" />
        <path d="M18.300 8H20v4h-1.700z" fill="#1b1b1b" />
        <path d="M13.300 7.500q1.300 3-.3 5" fill="none" stroke="#1b1b1b" strokeWidth="1.400" />
        <path d="M0 16.500C.5 15 .3 14.500.3 12 .5 8 3 5 8 3.500c3 4 2.500 10.500-4 11L2 14.500.8 17z" fill="#1b1b1b" />
      </svg>
      <Stack $align="right" $w={84}>{"14:44\n25-01-2022"}</Stack>
      <Badge>3</Badge>
    </Tray>
  </Taskbar>
);

export default function App() {
  return (
    <Screen>
      <GlobalStyle />
      <BrowserChrome />
      <AwsHeader />
      <ConsoleBody>
        <Sidebar />
        <JobsPage />
      </ConsoleBody>
      <ConsoleFooter />
      <WindowsTaskbar />
    </Screen>
  );
}
